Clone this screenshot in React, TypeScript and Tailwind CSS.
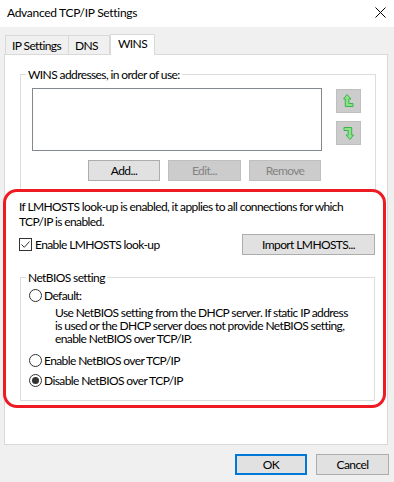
import React from "react";

function UpIcon() {
  return (
    <svg width="11" height="14" viewBox="0 0 11 14">
      <polygon
        points="4,0.5 8,5 5.8,5 5.8,9.5 10,9.5 10,12.5 2.3,12.5 2.3,5 0.5,5"
        fill="#8fe08a"
        stroke="#3bb54a"
        strokeWidth="1"
      />
    </svg>
  );
}

function DownIcon() {
  return (
    <svg width="11" height="14" viewBox="0 0 11 14" style={{ transform: "rotate(180deg)" }}>
      <polygon
        points="4,0.5 8,5 5.8,5 5.8,9.5 10,9.5 10,12.5 2.3,12.5 2.3,5 0.5,5"
        fill="#8fe08a"
        stroke="#3bb54a"
        strokeWidth="1"
      />
    </svg>
  );
}

function Radio({ checked }: { checked?: boolean }) {
  return (
    <span className="w-[13px] h-[13px] rounded-full border border-[#333] bg-white flex items-center justify-center shrink-0">
      {checked && <span className="w-[7px] h-[7px] rounded-full bg-[#333]" />}
    </span>
  );
}

export default function App() {
  return (
    <div
      className="w-[394px] h-[482px] bg-[#f0f0f0] flex flex-col text-[12px] tracking-[-0.6px] text-black overflow-hidden whitespace-nowrap"
      style={{ fontFamily: 'Lato, "Segoe UI", sans-serif' }}
    >
      {/* title bar */}
      <div className="h-[27px] bg-white flex items-center justify-between pl-[7px] pr-[8px]">
        <span className="leading-[15px] -mt-[3px] tracking-[-0.3px]">Advanced TCP/IP Settings</span>
        <svg width="11" height="11" viewBox="0 0 11 11" className="-mt-[3px]">
          <path d="M0.5 0.5 L10.5 10.5 M10.5 0.5 L0.5 10.5" stroke="#000" strokeWidth="1" />
        </svg>
      </div>

      {/* tabs */}
      <div className="flex items-end pl-[5px] mt-[7px] h-[20px] relative z-10">
        <div className="h-[19px] w-[64px] pl-[6px] border border-b-0 border-[#d9d9d9] bg-[#f0f0f0] flex items-center leading-[15px]">
          IP Settings
        </div>
        <div className="h-[19px] w-[41px] pl-[6px] border border-b-0 border-l-0 border-[#d9d9d9] bg-[#f0f0f0] flex items-center leading-[15px]">
          DNS
        </div>
        <div className="h-[21px] w-[45px] pl-[7px] border border-b-0 border-[#d9d9d9] bg-white flex items-start pt-[1px] leading-[15px] -mb-px">
          WINS
        </div>
      </div>

      {/* panel */}
      <div className="mx-[4px] w-[384px] h-[391px] border border-[#d9d9d9] bg-white flex flex-col">
        {/* WINS group */}
        <fieldset className="mt-[12px] ml-[15px] mr-[11px] border border-[#dcdcdc] pl-[11px] pr-[13px] pb-[9px] h-[123px]">
          <legend className="-ml-[6px] px-[2px] leading-[15px]">WINS addresses, in order of use:</legend>
          <div className="flex gap-[14px] mt-[6px]">
            <div className="flex flex-col w-[290px]">
              <div className="h-[63px] border border-[#828790] bg-white" />
              <div className="flex justify-end gap-[8px] mt-[9px] mr-[1px]">
                <button className="w-[72px] h-[21px] border border-[#adadad] bg-[#e1e1e1] leading-[15px]">Add...</button>
                <button className="w-[73px] h-[21px] border border-[#bfbfbf] bg-[#cccccc] text-[#838383] leading-[15px]">Edit...</button>
                <button className="w-[72px] h-[21px] border border-[#bfbfbf] bg-[#cccccc] text-[#838383] leading-[15px]">Remove</button>
              </div>
            </div>
            <div className="flex flex-col gap-[8px] mt-[1px]">
              <div className="w-[25px] h-[24px] border border-[#bfbfbf] bg-[#cccccc] flex items-center justify-center">
                <UpIcon />
              </div>
              <div className="w-[25px] h-[24px] border border-[#bfbfbf] bg-[#cccccc] flex items-center justify-center">
                <DownIcon />
              </div>
            </div>
          </div>
        </fieldset>

        {/* highlighted LMHOSTS / NetBIOS area */}
        <div className="-mt-[1px] -ml-[2px] w-[383px] h-[219px] border-[3px] border-[#ed1c24] rounded-[14px] pl-[13px] pr-[8px] pt-[7px] flex flex-col relative z-10">
          <p className="leading-[15px]">
            If LMHOSTS look-up is enabled, it applies to all connections for which
            <br />
            TCP/IP is enabled.
          </p>
          <div className="flex items-center justify-between mt-[5px]">
            <label className="flex items-center gap-[3px] leading-[15px]">
              <span className="w-[13px] h-[13px] border border-[#333] bg-white flex items-center justify-center">
                <svg width="11" height="11" viewBox="0 0 11 11">
                  <path d="M1.5 5.5 L4.3 8.3 L9.5 2.5" stroke="#333" strokeWidth="1" fill="none" />
                </svg>
              </span>
              Enable LMHOSTS look-up
            </label>
            <button className="w-[133px] h-[21px] border border-[#adadad] bg-[#e1e1e1] leading-[15px]">
              Import LMHOSTS...
            </button>
          </div>

          <fieldset className="mt-[15px] ml-[1px] border border-[#dcdcdc] pl-[8px] pb-[12px]">
            <legend className="-ml-[3px] px-[2px] leading-[15px]">NetBIOS setting</legend>
            <div className="flex items-center gap-[2px] mt-[3px] leading-[15px]">
              <Radio />
              <span>Default:</span>
            </div>
            <p className="ml-[26px] mt-[3px] leading-[13px]">
              Use NetBIOS setting from the DHCP server. If static IP address
              <br />
              is used or the DHCP server does not provide NetBIOS setting,
              <br />
              enable NetBIOS over TCP/IP.
            </p>
            <div className="flex items-center gap-[2px] mt-[8px] leading-[15px]">
              <Radio />
              <span>Enable NetBIOS over TCP/IP</span>
            </div>
            <div className="flex items-center gap-[2px] mt-[5px] leading-[15px]">
              <Radio checked />
              <span>Disable NetBIOS over TCP/IP</span>
            </div>
          </fieldset>
        </div>
      </div>

      {/* bottom buttons */}
      <div className="flex justify-end gap-[9px] pr-[5px] mt-[9px]">
        <button className="w-[72px] h-[21px] border-2 border-[#0078d7] bg-[#e1e1e1] leading-[15px]">OK</button>
        <button className="w-[73px] h-[21px] border border-[#adadad] bg-[#e1e1e1] leading-[15px]">Cancel</button>
      </div>
    </div>
  );
}
